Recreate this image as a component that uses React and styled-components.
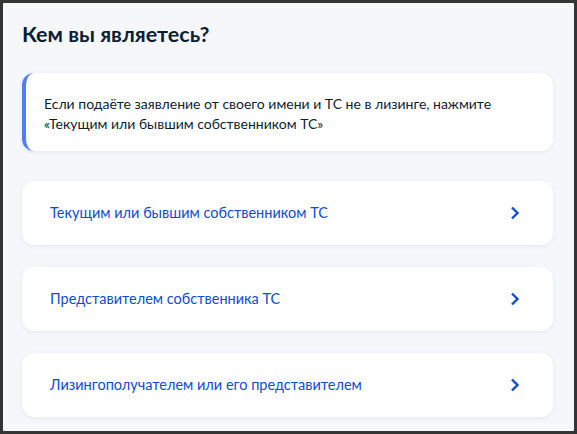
import React from "react"
import styled, { createGlobalStyle } from "styled-components"

const GlobalStyle = createGlobalStyle`
  html, body {
    margin: 0;
    padding: 0;
    background: #333333;
  }
  * {
    box-sizing: border-box;
  }
`

const Frame = styled.div`
  width: 577px;
  height: 434px;
  background: #f5f7fb;
  border: 3px solid #353535;
  border-radius: 4px;
  padding: 17px 21px 0 19px;
  font-family: Lato, "Noto Sans", sans-serif;
  color: #0b1f33;
  overflow: hidden;
`

const Title = styled.h1`
  margin: 0 0 25px;
  font-size: 21.5px;
  line-height: 28px;
  font-weight: 700;
  color: #0b1f33;
`

const InfoCard = styled.div`
  background: #ffffff;
  border-radius: 12px;
  border-left: 4px solid #4f7ff6;
  box-shadow: 0 1px 4px rgba(102, 118, 160, 0.12);
  padding: 21px 20px 17px 18px;
  font-size: 14px;
  line-height: 20px;
  margin-bottom: 30px;
`

const Options = styled.div`
  display: flex;
  flex-direction: column;
  gap: 22px;
`

const Option = styled.button`
  display: flex;
  align-items: center;
  justify-content: space-between;
  width: 100%;
  height: 64px;
  padding: 0 33px 0 28px;
  background: #ffffff;
  border: none;
  border-radius: 12px;
  box-shadow: 0 1px 4px rgba(102, 118, 160, 0.12);
  font-family: inherit;
  font-size: 14.5px;
  line-height: 20px;
  color: #0d4cd3;
  text-align: left;
  cursor: pointer;
`

const Chevron = () => (
  <svg width="10" height="14" viewBox="0 0 10 14" fill="none">
    <path
      d="M2 1.5L7.5 7L2 12.5"
      stroke="#0d4cd3"
      strokeWidth="2.4"
      strokeLinejoin="miter"
    />
  </svg>
)

const options = [
  "Текущим или бывшим собственником ТС",
  "Представителем собственника ТС",
  "Лизингополучателем или его представителем",
]

const App = () => (
  <>
    <GlobalStyle />
    <Frame>
      <Title>Кем вы являетесь?</Title>
      <InfoCard>
        Если подаёте заявление от своего имени и ТС не в лизинге, нажмите
        «Текущим или бывшим собственником ТС»
      </InfoCard>
      <Options>
        {options.map(label => (
          <Option key={label}>
            <span>{label}</span>
            <Chevron />
          </Option>
        ))}
      </Options>
    </Frame>
  </>
)

export default App
